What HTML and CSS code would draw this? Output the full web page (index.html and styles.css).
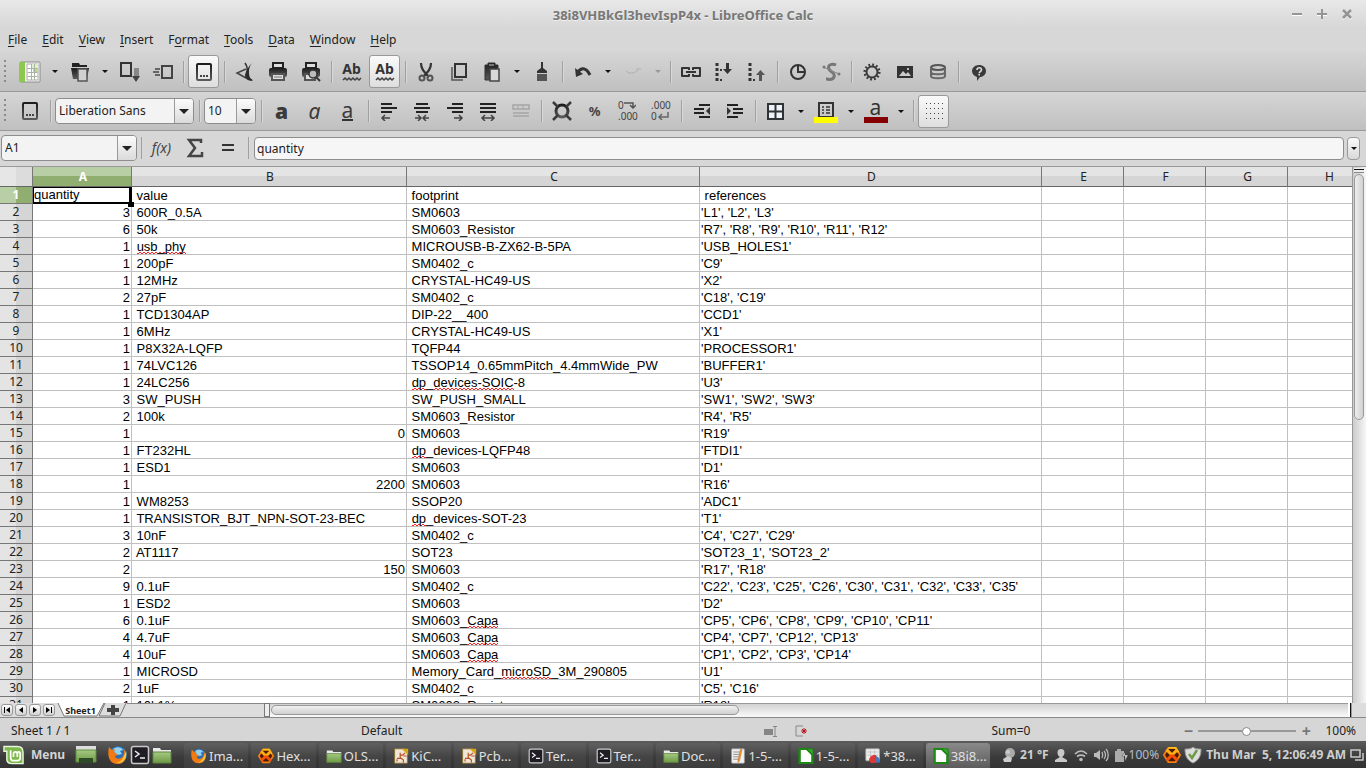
FILE: index.html
```html
<!DOCTYPE html>
<html lang="en">
<head>
<meta charset="utf-8">
<title>38i8VHBkGl3hevIspP4x - LibreOffice Calc</title>
<link rel="stylesheet" href="styles.css">
</head>
<body>
<svg class="defs" aria-hidden="true">
  <defs>
    <linearGradient id="dark" x1="0" y1="0" x2="0" y2="1"><stop offset="0" stop-color="#1c1c1c"/><stop offset="1" stop-color="#5a5a5a"/></linearGradient>
    <linearGradient id="green" x1="0" y1="0" x2="0" y2="1"><stop offset="0" stop-color="#a5c982"/><stop offset="1" stop-color="#6d9a45"/></linearGradient>
    <linearGradient id="hot" x1="0" y1="0" x2="0" y2="1"><stop offset="0" stop-color="#ffd21c"/><stop offset="1" stop-color="#f4360a"/></linearGradient>
    <symbol id="i-doc" viewBox="0 0 20 20"><rect x="3" y="2" width="14" height="16" rx="1" fill="none" stroke="url(#dark)" stroke-width="2"/><path d="M6 13h2v2H6zM9 13h2v2H9zM12 13h2v2h-2z" fill="#444"/></symbol>
    <symbol id="i-abc" viewBox="0 0 20 20"><path d="M1 17l2-2 2 2 2-2 2 2 2-2 2 2 2-2 2 2 2-2" fill="none" stroke="#444" stroke-width="1.5"/></symbol>
    <symbol id="i-firefox" viewBox="0 0 20 20"><circle cx="10" cy="10" r="9" fill="#2a6fb5"/><path d="M5 4c4-3 9-2 10 1l-3 1 2 3-4 1-3-2z" fill="#8fd3f0"/><path d="M1 2l3 3 3-1-1 3 4 3-3 1c0 3 6 4 8 0 2-3 1-6 0-8 5 5 4 16-5 16S-1 11 1 2z" fill="#f27a13"/><path d="M18 6c2 8-4 13-10 12 6-1 8-6 10-12z" fill="#ffc93a"/></symbol>
    <symbol id="i-term" viewBox="0 0 20 20"><rect x="1.500" y="1.500" width="17" height="17" rx="2" fill="#1f1c24" stroke="#c9c9c9" stroke-width="1.500"/><path d="M5 6l4 3-4 3M10 13h5" fill="none" stroke="#eee" stroke-width="1.500"/></symbol>
    <symbol id="i-folder" viewBox="0 0 20 20"><path d="M1 3h7l1 2h10v4H1z" fill="#e9e9e9"/><path d="M1 7h18v11H1z" fill="url(#green)" stroke="#5f853f"/></symbol>
    <symbol id="i-x" viewBox="0 0 20 20"><path d="M6 2h8l5 8-5 8H6l-5-8z" fill="#4a1a05" stroke="#f5800f" stroke-width="2" stroke-linejoin="round"/><path d="M6 2h8l3 5" fill="none" stroke="#ffc21a" stroke-width="2"/><path d="M10 10L4 4M10 10l6-6" stroke="#ffae14" stroke-width="3.500"/><path d="M10 10l-6 6M10 10l6 6" stroke="#f5500c" stroke-width="3.500"/></symbol>
    <symbol id="i-kicad" viewBox="0 0 20 20"><path d="M2 1h12l4 5v13H2z" fill="#efe6d5" stroke="#8a6b25"/><path d="M11 1h8v8z" fill="#d8a514"/><path d="M5 13h4V6M9 9h3l3-3M9 12l4 3v3M5 17v-3M13 10h4" fill="none" stroke="#b8532a" stroke-width="1.500"/></symbol>
    <symbol id="i-calc" viewBox="0 0 20 20"><path d="M2 1h9l7 7v11H2z" fill="#fff" stroke="#1c8a12" stroke-width="3"/><path d="M11 1h8v8z" fill="#35a82a" stroke="#147a0c"/></symbol>
    <symbol id="i-pad" viewBox="0 0 20 20"><rect x="2" y="1" width="16" height="18" rx="1" fill="#f2f2f2" stroke="#999"/><path d="M4 5h9M4 8h8M4 11h7M4 14h8" stroke="#777"/><path d="M15 2l-3 14-2 2 0-3 3-13z" fill="#f29a26" stroke="#b3541b" stroke-width=".5"/></symbol>
    <symbol id="i-sheet" viewBox="0 0 20 20"><rect x="1" y="1" width="17" height="15" rx="1" fill="#eee" stroke="#aaa"/><path d="M3 5h13M3 9h13M7 3v12M12 3v12" stroke="#bbb"/><path d="M5 16c0-5 4-8 9-7l2 9-8 1z" fill="#dd3a35"/><path d="M14 10c3 1 5 4 5 8h-5z" fill="#3a78c8"/></symbol>
  </defs>
</svg>
<div class="app">
  <header class="titlebar">
    <h1>38i8VHBkGl3hevIspP4x - LibreOffice Calc</h1>
    <div class="winctl">
      <button aria-label="Minimize"><svg viewBox="0 0 12 12"><path d="M1 7h10" stroke="#fff" stroke-width="2"/><path d="M1 6h10" stroke="#959595" stroke-width="2"/></svg></button>
      <button aria-label="Maximize"><svg viewBox="0 0 12 12"><path d="M1 7h10" stroke="#fff" stroke-width="2"/><path d="M1 6h10M6 1v10" stroke="#959595" stroke-width="2"/></svg></button>
      <button aria-label="Close"><svg viewBox="0 0 12 12"><path d="M2 3l8 8M10 3l-8 8" stroke="#fff" stroke-width="2"/><path d="M2 2l8 8M10 2l-8 8" stroke="#959595" stroke-width="2.500"/></svg></button>
    </div>
  </header>
  <nav class="menubar">
    <button><u>F</u>ile</button><button><u>E</u>dit</button><button><u>V</u>iew</button><button><u>I</u>nsert</button><button>F<u>o</u>rmat</button><button><u>T</u>ools</button><button><u>D</u>ata</button><button><u>W</u>indow</button><button><u>H</u>elp</button>
  </nav>

  <div class="toolbar" role="toolbar" aria-label="Standard">
    <span class="grip"></span>
    <button class="tool" aria-label="New"><svg class="big" viewBox="0 0 24 24"><rect x="2" y="2" width="20" height="20" rx="1" fill="#fafafa" stroke="#8a8a8a"/><path d="M2 2h5v20H2z" fill="#8cc84b"/><rect x="9" y="4" width="11" height="16" fill="#fff" stroke="#aaa"/><path d="M13 4h7v5h-7z" fill="#dff0cb"/><path d="M15 9h5v4h-5z" fill="#b5dc88"/><path d="M9.500 8.500h10M9.500 12.500h10M9.500 16.500h10M13.500 4v16M16.500 4v16" stroke="#a9b3a2" fill="none"/></svg></button><button class="drop" aria-label="New options"></button>
    <button class="tool" aria-label="Open"><svg viewBox="0 0 20 20"><path d="M2 1h7l1 2h7v2H2z" fill="#222"/><path d="M1 6h18l-2 11H3z" fill="url(#dark)"/><path d="M8 7h9v12H8z" fill="#d0d0d0" stroke="#555" stroke-width="1.500"/></svg></button><button class="drop" aria-label="Open options"></button>
    <button class="tool" aria-label="Save"><svg viewBox="0 0 20 20"><rect x="1" y="1" width="10" height="13" fill="none" stroke="#333" stroke-width="2"/><path d="M14 7h5M14 9h5M14 11h5M14 13h5" stroke="#444"/><path d="M12 14h8l-4 6z" fill="#444"/></svg></button>
    <button class="tool" aria-label="Send by e-mail"><svg viewBox="0 0 20 20"><rect x="9" y="4" width="10" height="12" fill="none" stroke="#444" stroke-width="2"/><path d="M2 7h5M0 10h6M2 13h5" stroke="#444" stroke-width="1.500"/></svg></button>
    <span class="sep"></span>
    <button class="tool on" aria-label="Edit file"><svg><use href="#i-doc"/></svg></button>
    <span class="sep"></span>
    <button class="tool" aria-label="Export as PDF"><svg viewBox="0 0 20 20"><path d="M11 7l-9 4 9 5" fill="none" stroke="#444" stroke-width="1.500"/><path d="M10 1c2 3 3 5 2 9s-1 6 5 8" fill="none" stroke="#333" stroke-width="1.500"/><path d="M17 1c-3 4-3 7-3 10s1 6 4 8c-6 0-8-3-8-6 1-4 3-8 7-12z" fill="#2b2b2b"/></svg></button>
    <button class="tool" aria-label="Print"><svg viewBox="0 0 20 20"><path d="M5 1h10v5H5z" fill="#ddd" stroke="#222" stroke-width="2"/><rect x="1" y="6" width="18" height="9" rx="2" fill="url(#dark)"/><path d="M4 12h12v6H4z" fill="#ddd" stroke="#555" stroke-width="2"/><path d="M6 15h8" stroke="#777"/></svg></button>
    <button class="tool" aria-label="Page preview"><svg viewBox="0 0 20 20"><path d="M5 1h10v5H5z" fill="#ddd" stroke="#222" stroke-width="2"/><rect x="1" y="6" width="18" height="9" rx="2" fill="url(#dark)"/><path d="M4 12h10v6H4z" fill="#ddd" stroke="#555" stroke-width="2"/><circle cx="12" cy="12" r="4" fill="#bbb" stroke="#333" stroke-width="1.500"/><path d="M15 15l4 4" stroke="#333" stroke-width="2"/></svg></button>
    <span class="sep"></span>
    <button class="tool abc" aria-label="Spelling"><span>Ab</span><svg><use href="#i-abc"/></svg></button>
    <button class="tool abc on" aria-label="Auto spellcheck"><span>Ab</span><svg><use href="#i-abc"/></svg></button>
    <span class="sep"></span>
    <button class="tool" aria-label="Cut"><svg viewBox="0 0 20 20"><path d="M5 1c0 5 2 8 8 14M15 1c0 5-2 8-8 14" fill="none" stroke="#333" stroke-width="2.200"/><circle cx="6" cy="16" r="2.500" fill="none" stroke="#555" stroke-width="2"/><circle cx="14" cy="16" r="2.500" fill="none" stroke="#555" stroke-width="2"/></svg></button>
    <button class="tool" aria-label="Copy"><svg viewBox="0 0 20 20"><path d="M6 2h11v13H6z" fill="none" stroke="#333" stroke-width="2"/><path d="M3 5v13h11" fill="none" stroke="#555" stroke-width="1.500"/></svg></button>
    <button class="tool" aria-label="Paste"><svg viewBox="0 0 20 20"><path d="M6 1h7v2h3v4H8v11H3V3h3z" fill="url(#dark)" stroke="#333"/><path d="M7 3h5" stroke="#ccc"/><path d="M8 7h9v12H8z" fill="#d8d8d8" stroke="#444" stroke-width="1.500"/></svg></button><button class="drop" aria-label="Paste options"></button>
    <button class="tool" aria-label="Clone formatting"><svg viewBox="0 0 20 20"><path d="M9 0h2v6l4 3v2H5V9l4-3z" fill="#333"/><path d="M5 12h10v7H5z" fill="#555"/></svg></button>
    <span class="sep"></span>
    <button class="tool" aria-label="Undo"><svg viewBox="0 0 20 20"><path d="M4 11c4-6 9-6 13 2" fill="none" stroke="#333" stroke-width="3"/><path d="M2 6l1 9 7-3z" fill="#333"/></svg></button><button class="drop" aria-label="Undo history"></button>
    <button class="tool" aria-label="Redo" disabled><svg viewBox="0 0 20 20"><path d="M3 9c3 3 8 3 12-1" fill="none" stroke="#b0b0b0"/><path d="M13 7h5" stroke="#b0b0b0"/></svg></button><button class="drop" aria-label="Redo history" disabled></button>
    <span class="sep"></span>
    <button class="tool" aria-label="Hyperlink"><svg viewBox="0 0 20 20"><path d="M8 8V6H1v8h7v-2M12 8V6h7v8h-7v-2" fill="none" stroke="#333" stroke-width="2" stroke-linejoin="round"/><path d="M5 10h10" stroke="#333" stroke-width="2"/></svg></button>
    <button class="tool" aria-label="Sort ascending"><svg viewBox="0 0 20 20"><path d="M3 1v18" stroke="#333" stroke-width="3" stroke-dasharray="3 2"/><path d="M6 18h2M6 8h2" stroke="#333" stroke-width="2"/><path d="M12 1h3v6h3l-4.500 5L9 7h3z" fill="#333"/></svg></button>
    <button class="tool" aria-label="Sort descending"><svg viewBox="0 0 20 20"><path d="M3 1v18" stroke="#333" stroke-width="3" stroke-dasharray="3 2"/><path d="M6 18h2" stroke="#333" stroke-width="2"/><path d="M12 19h3v-6h3l-4.500-5L9 13h3z" fill="#555"/></svg></button>
    <span class="sep"></span>
    <button class="tool" aria-label="Chart"><svg viewBox="0 0 20 20"><circle cx="10" cy="10" r="7" fill="none" stroke="#333" stroke-width="2"/><path d="M10 3v7h7" fill="none" stroke="#333" stroke-width="2"/></svg></button>
    <button class="tool" aria-label="Draw functions"><svg viewBox="0 0 20 20"><path d="M15 3c-4-2-9 0-7 4s7 4 5 8-5 2-8 2" fill="none" stroke="#777" stroke-width="3"/><path d="M2 5l16 7" stroke="#888"/><circle cx="3" cy="5" r="1.500" fill="#777"/><circle cx="18" cy="12" r="1.500" fill="#777"/></svg></button>
    <span class="sep"></span>
    <button class="tool" aria-label="Navigator"><svg viewBox="0 0 20 20"><circle cx="10" cy="10" r="5.500" fill="none" stroke="#3a3a3a" stroke-width="2"/><circle cx="10" cy="10" r="7.300" fill="none" stroke="#3a3a3a" stroke-width="2.500" stroke-dasharray="1.800 2.020"/></svg></button>
    <button class="tool" aria-label="Gallery"><svg viewBox="0 0 20 20"><rect x="2" y="4" width="16" height="12" fill="#333"/><path d="M4 14l4-5 3 3 2-2 3 4z" fill="#ccc"/><circle cx="13" cy="7" r="1" fill="#eee"/></svg></button>
    <button class="tool" aria-label="Data sources"><svg viewBox="0 0 20 20"><ellipse cx="10" cy="5.500" rx="7" ry="2.500" fill="#ccc" stroke="#555" stroke-width="2"/><path d="M3 6v8c0 3 14 3 14 0V6M3 10c0 3 14 3 14 0" fill="none" stroke="#666" stroke-width="2"/></svg></button>
    <span class="sep"></span>
    <button class="tool help" aria-label="Help"><svg viewBox="0 0 20 20"><path d="M10 3c4 0 7 2.500 7 6s-3 6-6 6l-3 4v-4c-3-1-5-3-5-6s3-6 7-6z" fill="#3a3a3a"/><path d="M8 8c0-3 4.500-3 4.500 0 0 1.500-2.300 1.500-2.300 3.200M10.200 12v1.500" fill="none" stroke="#ddd" stroke-width="1.600"/></svg></button>
  </div>

  <div class="toolbar" role="toolbar" aria-label="Formatting">
    <span class="grip"></span>
    <button class="tool" aria-label="Styles"><svg><use href="#i-doc"/></svg></button>
    <span class="sep"></span>
    <span class="combo font"><select aria-label="Font name"><option>Liberation Sans</option></select></span>
    <span class="sep"></span>
    <span class="combo size"><select aria-label="Font size"><option>10</option></select></span>
    <span class="sep"></span>
    <button class="tool ch b" aria-label="Bold">a</button>
    <button class="tool ch i" aria-label="Italic">a</button>
    <button class="tool ch" aria-label="Underline"><span class="ul">a</span></button>
    <span class="sep"></span>
    <button class="tool" aria-label="Align left"><svg viewBox="0 0 20 20"><path d="M2 3h11M2 7h16M2 11h11" stroke="#222" stroke-width="2"/><path d="M3 17h8M6 14l-3 3 3 3" stroke="#444" stroke-width="1.500" fill="none"/></svg></button>
    <button class="tool" aria-label="Center"><svg viewBox="0 0 20 20"><path d="M4 3h12M2 7h16M4 11h12" stroke="#222" stroke-width="2"/><path d="M3 17h5M6 14l3 3-3 3M17 17h-5M14 14l-3 3 3 3" stroke="#444" stroke-width="1.500" fill="none"/></svg></button>
    <button class="tool" aria-label="Align right"><svg viewBox="0 0 20 20"><path d="M7 3h11M2 7h16M7 11h11" stroke="#222" stroke-width="2"/><path d="M17 17H9M14 14l3 3-3 3" stroke="#444" stroke-width="1.500" fill="none"/></svg></button>
    <button class="tool" aria-label="Justify"><svg viewBox="0 0 20 20"><path d="M2 3h16M2 7h16M2 11h16" stroke="#222" stroke-width="2"/><path d="M5 17h10M7 14l-3 3 3 3M13 14l3 3-3 3" stroke="#444" stroke-width="1.500" fill="none"/></svg></button>
    <button class="tool" aria-label="Merge cells" disabled><svg viewBox="0 0 20 20"><path d="M2 4h16v4H2zM2 12h16M2 15h16" stroke="#a5a5a5" stroke-width="1.500" fill="none"/><path d="M7 4v4M12 4v4" stroke="#a5a5a5"/></svg></button>
    <span class="sep"></span>
    <button class="tool" aria-label="Currency"><svg viewBox="0 0 20 20"><circle cx="10" cy="10" r="6" fill="none" stroke="url(#dark)" stroke-width="3"/><path d="M1 1l5 5M19 1l-5 5M1 19l5-5M19 19l-5-5" stroke="#3a3a3a" stroke-width="2.500"/></svg></button>
    <button class="tool pct" aria-label="Percent">%</button>
    <button class="tool dec" aria-label="Add decimal"><span>0<svg viewBox="0 0 12 8"><path d="M0 2h9v4M6 4l3 3 3-3" fill="none" stroke="#555" stroke-width="1.500"/></svg></span><span>.000</span></button>
    <button class="tool dec" aria-label="Delete decimal"><span>.000</span><span>0<svg viewBox="0 0 12 8"><path d="M11 0v5H2M5 2L2 5l3 3" fill="none" stroke="#666" stroke-width="1.500"/></svg></span></button>
    <span class="sep"></span>
    <button class="tool" aria-label="Decrease indent"><svg viewBox="0 0 20 20"><path d="M7 4h11M2 8h10M2 12h10M7 16h11" stroke="#222" stroke-width="2"/><path d="M18 6v8l-4-4z" fill="#333"/></svg></button>
    <button class="tool" aria-label="Increase indent"><svg viewBox="0 0 20 20"><path d="M2 4h11M8 8h10M8 12h10M2 16h11" stroke="#222" stroke-width="2"/><path d="M2 6v8l4-4z" fill="#333"/></svg></button>
    <span class="sep"></span>
    <button class="tool" aria-label="Borders"><svg viewBox="0 0 20 20"><rect x="2" y="3" width="15" height="15" fill="#eef2fa" stroke="#2e3436" stroke-width="2"/><path d="M9.500 3v15M2 10.500h15" stroke="#2e3436" stroke-width="2"/></svg></button><button class="drop" aria-label="Border options"></button>
    <button class="tool" aria-label="Background color"><svg class="big" viewBox="0 0 24 24"><path d="M5 18V4h14v14" fill="none" stroke="#333" stroke-width="2"/><path d="M8 8h2M8 11h2M8 14h2M12 8h4M12 11h4M12 14h4" stroke="#333" stroke-width="1.500"/><path d="M0 18h24v6H0z" fill="#ff0"/><path d="M4 17.500h16" stroke="#333"/></svg></button><button class="drop" aria-label="Background options"></button>
    <button class="tool fc" aria-label="Font color"><span>a</span><i></i></button><button class="drop" aria-label="Font color options"></button>
    <span class="sep"></span>
    <button class="tool on" aria-label="Grid lines"><svg viewBox="0 0 20 20"><path d="M2 2.500h17M2 7.500h17M2 12.500h17M2 17.500h17" stroke="#444" stroke-width="1" stroke-dasharray="1 3"/></svg></button>
  </div>

  <div class="formula">
    <span class="combo name"><input aria-label="Name box" value="A1"><button aria-label="Cell ranges"></button></span>
    <span class="sep"></span>
    <button class="tool fx" aria-label="Function wizard">f(x)</button>
    <button class="tool" aria-label="Sum"><svg viewBox="0 0 20 20"><path d="M16 5V2H4l6 8-6 8h13v-4" fill="none" stroke="#444" stroke-width="2.500"/></svg></button>
    <button class="tool" aria-label="Function"><svg viewBox="0 0 20 20"><path d="M4 7h12M4 12h12" stroke="#333" stroke-width="2"/></svg></button>
    <span class="sep"></span>
    <input class="content" aria-label="Input line" value="quantity">
    <button class="expand" aria-label="Expand formula bar"></button>
  </div>

  <main class="work">
    <div class="sheet">
      <table>
        <colgroup><col class="c0"><col class="cA"><col class="cB"><col class="cC"><col class="cD"><col class="cE"><col class="cE"><col class="cE"><col class="cE"></colgroup>
        <thead><tr><th></th><th class="cur">A</th><th>B</th><th>C</th><th>D</th><th>E</th><th>F</th><th>G</th><th>H</th></tr></thead>
        <tbody>
          <tr><th class="cur">1</th><td class="active">quantity</td><td> value</td><td> footprint</td><td> references</td><td></td><td></td><td></td><td></td></tr>
          <tr><th>2</th><td class="n">3</td><td> 600R_0.5A</td><td> SM0603</td><td>'L1', 'L2', 'L3'</td><td></td><td></td><td></td><td></td></tr>
          <tr><th>3</th><td class="n">6</td><td> 50k</td><td> SM0603_Resistor</td><td>'R7', 'R8', 'R9', 'R10', 'R11', 'R12'</td><td></td><td></td><td></td><td></td></tr>
          <tr><th>4</th><td class="n">1</td><td> <span class="sp">usb_phy</span></td><td> MICROUSB-B-ZX62-B-5PA</td><td>'USB_HOLES1'</td><td></td><td></td><td></td><td></td></tr>
          <tr><th>5</th><td class="n">1</td><td> 200pF</td><td> SM0402_c</td><td>'C9'</td><td></td><td></td><td></td><td></td></tr>
          <tr><th>6</th><td class="n">1</td><td> 12MHz</td><td> CRYSTAL-HC49-US</td><td>'X2'</td><td></td><td></td><td></td><td></td></tr>
          <tr><th>7</th><td class="n">2</td><td> 27pF</td><td> SM0402_c</td><td>'C18', 'C19'</td><td></td><td></td><td></td><td></td></tr>
          <tr><th>8</th><td class="n">1</td><td> TCD1304AP</td><td> DIP-22__400</td><td>'CCD1'</td><td></td><td></td><td></td><td></td></tr>
          <tr><th>9</th><td class="n">1</td><td> 6MHz</td><td> CRYSTAL-HC49-US</td><td>'X1'</td><td></td><td></td><td></td><td></td></tr>
          <tr><th>10</th><td class="n">1</td><td> P8X32A-LQFP</td><td> TQFP44</td><td>'PROCESSOR1'</td><td></td><td></td><td></td><td></td></tr>
          <tr><th>11</th><td class="n">1</td><td> 74LVC126</td><td> TSSOP14_0.65mmPitch_4.4mmWide_PW</td><td>'BUFFER1'</td><td></td><td></td><td></td><td></td></tr>
          <tr><th>12</th><td class="n">1</td><td> 24LC256</td><td> <span class="sp">dp</span>_<span class="sp">devices-SOIC</span>-8</td><td>'U3'</td><td></td><td></td><td></td><td></td></tr>
          <tr><th>13</th><td class="n">3</td><td> SW_PUSH</td><td> SW_PUSH_SMALL</td><td>'SW1', 'SW2', 'SW3'</td><td></td><td></td><td></td><td></td></tr>
          <tr><th>14</th><td class="n">2</td><td> 100k</td><td> SM0603_Resistor</td><td>'R4', 'R5'</td><td></td><td></td><td></td><td></td></tr>
          <tr><th>15</th><td class="n">1</td><td class="n">0</td><td> SM0603</td><td>'R19'</td><td></td><td></td><td></td><td></td></tr>
          <tr><th>16</th><td class="n">1</td><td> FT232HL</td><td> <span class="sp">dp</span>_devices-LQFP48</td><td>'FTDI1'</td><td></td><td></td><td></td><td></td></tr>
          <tr><th>17</th><td class="n">1</td><td> ESD1</td><td> SM0603</td><td>'D1'</td><td></td><td></td><td></td><td></td></tr>
          <tr><th>18</th><td class="n">1</td><td class="n">2200</td><td> SM0603</td><td>'R16'</td><td></td><td></td><td></td><td></td></tr>
          <tr><th>19</th><td class="n">1</td><td> WM8253</td><td> SSOP20</td><td>'ADC1'</td><td></td><td></td><td></td><td></td></tr>
          <tr><th>20</th><td class="n">1</td><td> TRANSISTOR_BJT_NPN-SOT-23-BEC</td><td> <span class="sp">dp</span>_devices-SOT-23</td><td>'T1'</td><td></td><td></td><td></td><td></td></tr>
          <tr><th>21</th><td class="n">3</td><td> 10nF</td><td> SM0402_c</td><td>'C4', 'C27', 'C29'</td><td></td><td></td><td></td><td></td></tr>
          <tr><th>22</th><td class="n">2</td><td> AT1117</td><td> SOT23</td><td>'SOT23_1', 'SOT23_2'</td><td></td><td></td><td></td><td></td></tr>
          <tr><th>23</th><td class="n">2</td><td class="n">150</td><td> SM0603</td><td>'R17', 'R18'</td><td></td><td></td><td></td><td></td></tr>
          <tr><th>24</th><td class="n">9</td><td> 0.1uF</td><td> SM0402_c</td><td>'C22', 'C23', 'C25', 'C26', 'C30', 'C31', 'C32', 'C33', 'C35'</td><td></td><td></td><td></td><td></td></tr>
          <tr><th>25</th><td class="n">1</td><td> ESD2</td><td> SM0603</td><td>'D2'</td><td></td><td></td><td></td><td></td></tr>
          <tr><th>26</th><td class="n">6</td><td> 0.1uF</td><td> SM0603_<span class="sp">Capa</span></td><td>'CP5', 'CP6', 'CP8', 'CP9', 'CP10', 'CP11'</td><td></td><td></td><td></td><td></td></tr>
          <tr><th>27</th><td class="n">4</td><td> 4.7uF</td><td> SM0603_<span class="sp">Capa</span></td><td>'CP4', 'CP7', 'CP12', 'CP13'</td><td></td><td></td><td></td><td></td></tr>
          <tr><th>28</th><td class="n">4</td><td> 10uF</td><td> SM0603_<span class="sp">Capa</span></td><td>'CP1', 'CP2', 'CP3', 'CP14'</td><td></td><td></td><td></td><td></td></tr>
          <tr><th>29</th><td class="n">1</td><td> MICROSD</td><td> Memory_Card_<span class="sp">microSD</span>_3M_290805</td><td>'U1'</td><td></td><td></td><td></td><td></td></tr>
          <tr><th>30</th><td class="n">2</td><td> 1uF</td><td> SM0402_c</td><td>'C5', 'C16'</td><td></td><td></td><td></td><td></td></tr>
          <tr><th>31</th><td class="n">1</td><td> 10k1%</td><td> SM0603_Resistor</td><td>'R18'</td><td></td><td></td><td></td><td></td></tr>
        </tbody>
      </table>
    </div>
    <div class="vscroll"><span class="vsplit"></span><span class="vthumb"></span></div>
  </main>

  <div class="tabs">
    <button class="nav" aria-label="First sheet"><svg viewBox="0 0 8 8"><path d="M1 1h1v6H1zM7 1v6L3 4z"/></svg></button>
    <button class="nav" aria-label="Previous sheet"><svg viewBox="0 0 8 8"><path d="M6 1v6L2 4z"/></svg></button>
    <button class="nav" aria-label="Next sheet"><svg viewBox="0 0 8 8"><path d="M2 1v6l4-3z"/></svg></button>
    <button class="nav" aria-label="Last sheet"><svg viewBox="0 0 8 8"><path d="M6 1h1v6H6zM1 1v6l4-3z"/></svg></button>
    <button class="tab"><svg viewBox="0 0 48 14" preserveAspectRatio="none"><path d="M1 0l6 13h33l7-13" fill="#fff" stroke="#777"/></svg><span>Sheet1</span></button>
    <button class="tab add" aria-label="Add sheet"><svg viewBox="0 0 28 14"><path d="M6 0L0 13h21l6-13" fill="#ddd" stroke="#777"/><path d="M12 2h4v3h4v4h-4v3h-4V9H8V5h4z" fill="#444"/></svg></button>
    <span class="rest"></span><span class="split"></span>
    <div class="hscroll"><span class="hthumb"></span></div><span class="hend"></span><span class="corner"></span>
  </div>

  <footer class="status">
    <span class="s1">Sheet 1 / 1</span><span class="s2">Default</span>
    <svg class="ins" viewBox="0 0 13 11"><path d="M0 3h9v6H0z" fill="#858585"/><path d="M9 .5h4M11 1v9M9 10.500h4" stroke="#858585"/></svg>
    <svg class="mod" viewBox="0 0 13 13"><path d="M8 1H1v10h7" fill="none" stroke="#888"/><path d="M9 3v6M6 6h6M7 4l4 4M11 4L7 8" stroke="#b3141b"/></svg>
    <span class="sum">Sum=0</span>
    <button class="z" aria-label="Zoom out">−</button>
    <input type="range" aria-label="Zoom" min="0" max="100" value="49">
    <button class="z" aria-label="Zoom in">+</button>
    <span class="pc">100%</span>
  </footer>

  <div class="panel">
    <button class="mint"><svg viewBox="0 0 22 20"><path d="M1 1h14c4 0 6 2 6 6v12H9c-4 0-5-2-5-5V6H1z" fill="#7db84a" stroke="#eaf5dd" stroke-width="1.500"/><path d="M8 5v7c0 3 1 4 3 4h4c2 0 3-1 3-3V9c0-3-3-3-3 0v3M15 9c0-3-4-3-4 0v3" fill="none" stroke="#fff" stroke-width="1.800"/></svg>Menu</button>
    <button class="desk" aria-label="Show desktop"><svg viewBox="0 0 22 20"><path d="M1 1h20v4H1z" fill="#ddd"/><path d="M1 5h20v12H1z" fill="url(#green)" stroke="#638a42"/><path d="M4 13h14v5H4z" fill="#2f4a26"/></svg></button>
    <button class="q" aria-label="Firefox"><svg><use href="#i-firefox"/></svg></button><button class="q" aria-label="Terminal"><svg><use href="#i-term"/></svg></button><button class="q" aria-label="Files"><svg><use href="#i-folder"/></svg></button>
    <div class="tasks">
      <button><svg><use href="#i-firefox"/></svg>Ima...</button>
      <button><svg><use href="#i-x"/></svg>Hex...</button>
      <button><svg><use href="#i-folder"/></svg>OLS...</button>
      <button><svg><use href="#i-kicad"/></svg>KiC...</button>
      <button><svg><use href="#i-kicad"/></svg>Pcb...</button>
      <button><svg><use href="#i-term"/></svg>Ter...</button>
      <button><svg><use href="#i-term"/></svg>Ter...</button>
      <button><svg><use href="#i-folder"/></svg>Doc...</button>
      <button><svg><use href="#i-pad"/></svg>1-5-...</button>
      <button><svg><use href="#i-calc"/></svg>1-5-...</button>
      <button><svg><use href="#i-sheet"/></svg>*38...</button>
      <button class="cur"><svg><use href="#i-calc"/></svg>38i8...</button>
    </div>
    <div class="tray">
      <svg viewBox="0 0 16 16"><circle cx="10" cy="6" r="5" fill="#aaa"/><circle cx="8" cy="5" r="2" fill="#ccc"/><path d="M3 12l5-3 4 2-1 4H4z" fill="#ccc"/></svg><b>21 °F</b>
      <svg viewBox="0 0 16 16"><path d="M8 2c5 0 4 7 1 8l5 3v2H2v-2l5-3C4 9 3 2 8 2z" fill="#c9c9c9"/></svg>
      <svg viewBox="0 0 16 16"><path d="M2 7c4-4 8-4 12 0M4 9.500c3-2 5-2 8 0" fill="none" stroke="#bbb" stroke-width="1.600"/><circle cx="8" cy="12.500" r="1.800" fill="#bbb"/></svg>
      <svg viewBox="0 0 16 16"><path d="M1 6h2l4-3v10l-4-3H1z" fill="#bbb"/><path d="M9 5c1 2 1 4 0 6M11 4c2 2 2 6 0 8M13 2c3 3 3 9 0 12" fill="none" stroke="#bbb" stroke-width="1.300"/></svg>
      <svg class="bat" viewBox="0 0 16 16"><path d="M2 4h2V2h4v2h3v11H2z" fill="#aaa"/><path d="M12 5v3h3l-3 6V9H9z" fill="#ddd" stroke="#444" stroke-width=".5"/></svg><span class="charge">100%</span>
      <svg class="xi"><use href="#i-x"/></svg>
      <svg class="shield" viewBox="0 0 18 18"><path d="M9 1c2 2 5 2 8 2 0 7-2 11-8 14C3 14 1 10 1 3c3 0 6 0 8-2z" fill="#ddd" stroke="#999"/><path d="M5 8l3 4 5-8" fill="none" stroke="#6e9c48" stroke-width="2.500"/></svg>
      <b class="clock">Thu Mar&nbsp; 5, 12:06:49 AM</b>
      <svg viewBox="0 0 16 16"><path d="M1 3h9v7H1z" fill="none" stroke="#c9c9c9" stroke-width="1.500"/><path d="M13 6v7H5" fill="none" stroke="#c9c9c9" stroke-width="1.500"/></svg>
    </div>
  </div>
</div>
</body>
</html>
```
FILE: styles.css
```css
* { box-sizing: border-box; }
html, body { height: 100%; margin: 0; }
body { font: 12px/16px "Noto Sans", sans-serif; color: #222; background: #d6d6d6; overflow: hidden; }
button, input, select { font: inherit; color: inherit; margin: 0; padding: 0; border: 0; background: none; outline: none; }
svg { display: block; flex: none; }
.defs { position: absolute; width: 0; height: 0; }
.app { display: flex; flex-direction: column; height: 100vh; }

.titlebar { display: flex; align-items: center; height: 28px; flex: none; position: relative; background: linear-gradient(#e8e8e8, #d7d7d7); }
.titlebar h1 { flex: 1; margin: 0; padding-top: 2px; text-align: center; font-size: 13px; font-weight: bold; color: #777; text-shadow: 0 1px #f0f0f0; }
.winctl { position: absolute; right: 13px; top: 8px; display: flex; gap: 13px; }
.winctl svg { width: 12px; height: 12px; }

.menubar { display: flex; height: 24px; flex: none; align-items: center; background: #d7d7d7; padding-left: 1px; }
.menubar button { padding: 0 8px 0 7px; }
.menubar u { text-underline-offset: 2px; }

.toolbar { display: flex; align-items: center; height: 39px; flex: none; border-bottom: 1px solid #999; background: linear-gradient(#d5d5d5, #c0c0c0); }
.menubar + .toolbar { height: 40px; }
.grip { width: 2px; height: 24px; margin: 0 7px 0 4px; background: repeating-linear-gradient(#8a8a8a 0 2px, transparent 2px 5px); }
.tool { width: 33px; height: 33px; flex: none; display: flex; align-items: center; justify-content: center; border: 1px solid transparent; border-radius: 3px; }
.tool svg { width: 20px; height: 20px; }
.tool svg.big { width: 24px; height: 24px; }
.tool.on { border-color: #999; background: linear-gradient(#fafafa, #dedede); width: 31px; margin: 0 1px; }
.drop { width: 17px; height: 33px; flex: none; display: grid; place-items: center; }
.drop::after, .expand::after { content: ""; border: 3px solid transparent; border-top-color: #111; border-bottom: 0; }
.drop:disabled::after { border-top-color: #999; }
.sep { width: 1px; height: 22px; margin: 0 3px 0 4px; flex: none; background: #a0a0a0; box-shadow: 1px 0 #d9d9d9; }
.abc { flex-direction: column; }
.abc span { font-weight: bold; font-size: 14px; line-height: 16px; height: 17px; color: #333; }
.abc svg { width: 20px; height: 20px; margin-top: -15px; }
.ch { font-size: 21px; line-height: 24px; color: #3a3a3a; }
.ch.b { font-weight: 900; }
.ch.i { font-style: italic; }
.ch .ul { line-height: 16px; padding-bottom: 1px; border-bottom: 2px solid #333; }
.pct { font-size: 13px; font-weight: bold; color: #444; }
.dec { flex-direction: column; font-size: 10px; line-height: 11px; color: #444; }
.dec span { display: flex; width: 19px; }
.dec svg { width: 12px; height: 8px; margin-top: 1px; }
.fc { flex-direction: column; }
.fc span { font-size: 21px; line-height: 16px; height: 18px; color: #333; }
.fc i { width: 24px; height: 6px; background: #850000; }

.combo { position: relative; display: flex; height: 26px; border: 1px solid #8d8d8d; border-radius: 4px; background: #f3f3f3; overflow: hidden; margin: 0 1px; }
.combo select { appearance: none; width: 100%; padding-left: 3px; }
.combo::after { content: ""; position: absolute; right: 0; top: 0; width: 18px; height: 100%; border-left: 1px solid #999; background: linear-gradient(#fcfcfc, #dadada); pointer-events: none; }
.combo::before { content: ""; position: absolute; z-index: 1; right: 4px; top: 10px; border: 5px solid transparent; border-top-color: #222; border-bottom: 0; pointer-events: none; }
.combo.font { width: 139px; }
.combo.size { width: 52px; }
.formula { display: flex; align-items: center; height: 36px; flex: none; border-bottom: 1px solid #999; background: #d7d7d7; padding: 0 6px 1px 1px; }
.combo.name { width: 136px; margin: 0; }
.combo.name input { flex: 1; min-width: 0; padding-left: 3px; }
.combo.name button { width: 18px; }
.fx { font-style: italic; font-size: 14px; color: #444; }
.content { flex: 1; min-width: 0; height: 23px; margin-left: 2px; padding-left: 2px; border: 1px solid #8d8d8d; border-radius: 4px; background: #f6f6f6; }
.expand { width: 13px; height: 23px; margin-left: 3px; display: grid; place-items: center; border: 1px solid #999; border-radius: 4px; background: linear-gradient(#fafafa, #d9d9d9); }

.work { display: flex; flex: 1; min-height: 0; overflow: hidden; }
.sheet { flex: 1; min-width: 0; overflow: hidden; background: #fff; }
table { table-layout: fixed; width: 1370px; border-collapse: separate; border-spacing: 0; font: 13px/16px "Liberation Sans", Arial, sans-serif; color: #000; }
.c0 { width: 33px; } .cA { width: 99px; } .cB { width: 275px; } .cC { width: 293px; } .cD { width: 342px; } .cE { width: 82px; }
td { height: 17px; padding: 1px 0 0 1px; border-right: 1px solid #c0c0c0; border-bottom: 1px solid #c0c0c0; white-space: pre; line-height: 15px; }
td.n { text-align: right; padding-right: 1px; }
th { padding: 0; font: 12px/16px "Noto Sans", sans-serif; color: #222; border-right: 1px solid #777; }
thead th { height: 20px; padding-left: 2px; border-bottom: 1px solid #666; background: linear-gradient(#e4e4e4 50%, #d5d5d5 50%); }
thead th:first-child { background: linear-gradient(90deg, #e6e6e6 50%, #dcdcdc 50%); }
tbody th { height: 17px; border-bottom: 1px solid #777; background: linear-gradient(90deg, #e4e4e4 50%, #d5d5d5 50%); }
thead th.cur { color: #fff; font-weight: bold; background: linear-gradient(#b8cfa6 50%, #8fae6f 50%); }
tbody th.cur { color: #fff; font-weight: bold; background: linear-gradient(90deg, #b8cfa6 50%, #8fae6f 50%); }
td.active { position: relative; box-shadow: inset 1px 1px #000, inset -1px 0 #000; border-right: 2px solid #000; border-bottom: 2px solid #000; line-height: 14px; }
td.active::after { content: ""; position: absolute; right: -4px; bottom: -5px; width: 6px; height: 5px; background: #000; }
.sp { background: repeating-linear-gradient(90deg, #f22 0 2px, transparent 2px 4px) 0 100% / 100% 1px no-repeat, repeating-linear-gradient(90deg, transparent 0 2px, #f22 2px 4px) 0 calc(100% - 1px) / 100% 1px no-repeat; }

.vscroll { width: 14px; border-left: 1px solid #999; padding: 0 2px 0 1px; display: flex; flex-direction: column; background: linear-gradient(90deg, #ccc, #f6f6f6); }
.vsplit { height: 5px; margin: 1px 0 1px; background: linear-gradient(#eee 1px, #111 1px 2px, #eee 2px); border-bottom: 1px solid #888; }
.vthumb { width: 10px; height: 246px; border: 1px solid #999; border-radius: 5px; background: linear-gradient(90deg, #eee, #d0d0d0); }

.tabs { display: flex; align-items: stretch; height: 15px; flex: none; border-bottom: 1px solid #888; background: #ddd; padding-left: 1px; }
.nav { width: 12px; height: 12px; margin: 1px 2px 0 0; display: grid; place-items: center; border: 1px solid #999; border-radius: 3px; background: linear-gradient(#fff, #d0d0d0); }
.nav svg { width: 8px; height: 8px; }
.tab { position: relative; width: 47px; height: 14px; font: bold 9px/13px "Noto Sans", sans-serif; }
.tab svg { position: absolute; left: 0; top: 0; width: 48px; height: 14px; }
.tab span { position: relative; }
.tab.add { width: 28px; margin-left: -5px; }
.tab.add svg { width: 28px; }
.rest { width: 137px; border-top: 1px solid #888; }
.split { width: 6px; border: 1px solid #777; background: #eee; }
.hscroll { flex: 1; border-top: 1px solid #999; background: linear-gradient(#d2d2d2, #fafafa); padding: 1px 0 0 1px; }
.hthumb { display: block; width: 43.5%; height: 10px; border: 1px solid #999; border-radius: 5px; background: linear-gradient(#f0f0f0, #d0d0d0); }
.hend { width: 4px; background: linear-gradient(90deg, #fff 2px, #111 2px 3px, #999 3px); }
.corner { width: 14px; background: #ddd; }

.status { display: flex; align-items: center; height: 23px; flex: none; padding: 3px 10px 0 11px; }
.s1 { width: 350px; }
.s2 { flex: 1; }
.ins { width: 13px; height: 11px; margin-right: 18px; }
.mod { width: 13px; height: 13px; margin-right: 183px; }
.sum { width: 192px; }
.z { width: 10px; color: #777; font-size: 16px; font-weight: bold; }
input[type=range] { appearance: none; width: 98px; height: 14px; margin: 0 5px; background: linear-gradient(#999, #999) center / 100% 2px no-repeat; }
input[type=range]::-webkit-slider-thumb { appearance: none; width: 9px; height: 9px; border: 1px solid #888; border-radius: 50%; background: #fff; }
.pc { margin-left: 14px; }

.panel { display: flex; align-items: center; height: 27px; flex: none; color: #e0e0e0; background: linear-gradient(#5c5c5c, #3a3a3a 60%, #333); font-size: 13px; overflow: hidden; }
.mint { display: flex; align-items: center; gap: 7px; width: 71px; padding-left: 3px; font-size: 12px; font-weight: bold; color: #d5d5d5; }
.mint svg { width: 21px; height: 20px; }
.desk { width: 36px; padding-left: 4px; }
.desk svg { width: 22px; height: 20px; }
.q { width: 22px; display: grid; place-items: center; }
.q svg { width: 20px; height: 20px; }
.tasks { display: flex; flex: 1; min-width: 0; margin: 0 10px 0 11px; gap: 3px; align-self: stretch; }
.tasks button { flex: 1; min-width: 0; margin-top: 2px; display: flex; align-items: center; gap: 2px; padding: 0 0 0 7px; white-space: nowrap; border-radius: 3px 3px 0 0; background: rgba(255,255,255,.05); }
.tasks button.cur { background: linear-gradient(#8a8a8a, #5c5c5c); }
.tasks svg { width: 16px; height: 16px; }
.tray { display: flex; align-items: center; flex: none; gap: 4px; color: #d0d0d0; font-size: 12px; }
.tray svg { width: 16px; height: 16px; }
.tray .bat { margin-right: -4px; }
.tray .charge { color: #aebdc9; }
.tray .xi, .tray .shield { width: 18px; height: 18px; }
.tray .xi { margin-right: -1px; }
.tray .clock { white-space: pre; }
```
